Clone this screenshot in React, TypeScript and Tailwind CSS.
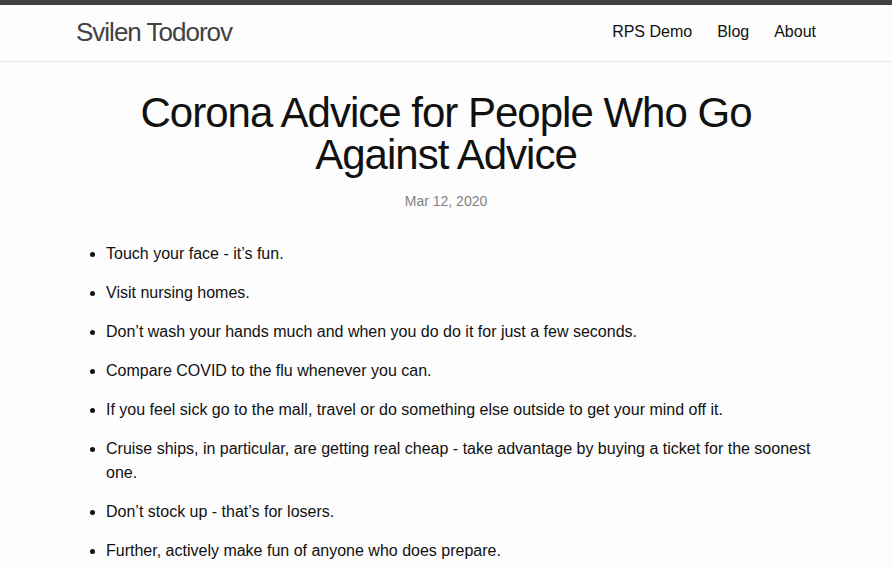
const ITEMS = [
  'Touch your face - it’s fun.',
  'Visit nursing homes.',
  'Don’t wash your hands much and when you do do it for just a few seconds.',
  'Compare COVID to the flu whenever you can.',
  'If you feel sick go to the mall, travel or do something else outside to get your mind off it.',
  'Cruise ships, in particular, are getting real cheap - take advantage by buying a ticket for the soonest one.',
  'Don’t stock up - that’s for losers.',
  'Further, actively make fun of anyone who does prepare.',
]

export default function App() {
  return (
    <div className="min-h-screen bg-[#fdfdfd] text-[#111] font-['Liberation_Sans',Arial,sans-serif]">
      {/* ── Header ── */}
      <header className="border-t-[5px] border-b border-t-[#424242] border-b-[#e8e8e8]">
        <div className="max-w-[800px] h-[56px] mx-auto px-[30px] flex items-start justify-between">
          <a href="#" className="text-[26px] leading-[54px] tracking-[-1px] text-[#424242]">
            Svilen Todorov
          </a>
          <nav className="self-center flex items-center gap-[25px] text-base leading-6 pb-0.5">
            <a href="#">RPS Demo</a>
            <a href="#">Blog</a>
            <a href="#">About</a>
          </nav>
        </div>
      </header>

      {/* ── Post ── */}
      <main className="py-[30px]">
        <article className="max-w-[800px] mx-auto px-[30px]">
          <header className="text-center mb-[30px]">
            <h1 className="text-[42px] leading-[42px] tracking-[-1px] mb-[15px]">
              Corona Advice for People Who Go Against Advice
            </h1>
            <p className="text-sm leading-[21px] text-[#828282]">Mar 12, 2020</p>
          </header>

          <ul className="list-disc ml-[30px] text-base leading-6">
            {ITEMS.map((item) => (
              <li key={item} className="mb-[15px]">{item}</li>
            ))}
          </ul>
        </article>
      </main>
    </div>
  )
}
